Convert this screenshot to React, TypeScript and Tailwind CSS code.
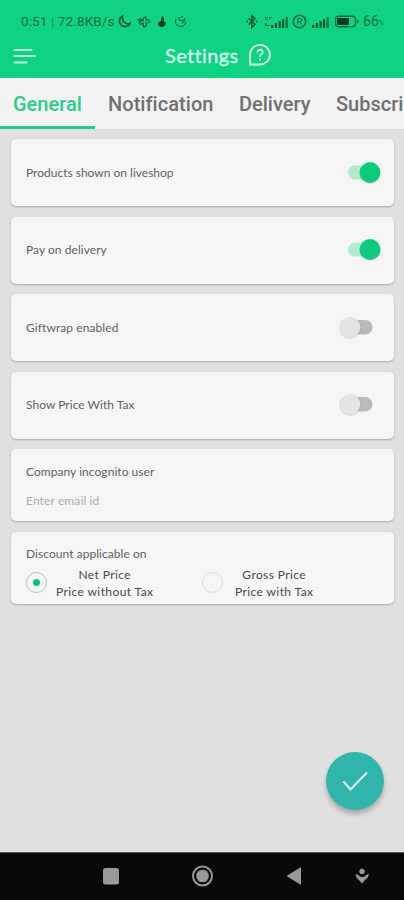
import type { ReactNode } from "react";

function Toggle({ on }: { on: boolean }) {
  return (
    <svg className="block h-[30px] w-[56px] shrink-0" viewBox="0 0 56 30" role="switch" aria-checked={on}>
      {on ? (
        <>
          <rect x="18" y="7.500" width="31" height="14" rx="7" fill="#b2ebd0" />
          <circle cx="40" cy="15.500" r="10.600" fill="#000" opacity=".12" />
          <circle cx="40" cy="14.500" r="10.400" fill="#0dcb7e" />
        </>
      ) : (
        <>
          <rect x="12" y="7" width="30.500" height="14.500" rx="7.200" fill="#b9b9b9" />
          <circle cx="20" cy="15" r="10.800" fill="#000" opacity=".1" />
          <circle cx="20" cy="14.500" r="10.300" fill="#e4e4e4" />
        </>
      )}
    </svg>
  );
}

function Card({ className, children }: { className: string; children: ReactNode }) {
  return (
    <section className={`rounded-[5px] bg-[#f6f6f6] shadow-[0_1px_2px_rgba(0,0,0,0.25)] ${className}`}>
      {children}
    </section>
  );
}

function SettingRow({ label, on, fit }: { label: string; on: boolean; fit: string }) {
  return (
    <Card className="flex h-[67px] items-center justify-between pr-[8px] pl-[15px]">
      <span className={`text-[12px] whitespace-nowrap text-[#5f5f5f] ${fit}`}>{label}</span>
      <Toggle on={on} />
    </Card>
  );
}

function Signal({ network }: { network?: boolean }) {
  return (
    <svg className={network ? "h-[14px] w-[26px]" : "h-[14px] w-[19px]"} viewBox={network ? "0 0 26 14" : "7 0 19 14"} fill="#0b5537">
      {network && (
        <path d="M2 2h3v1H3v1h2v1H2zM6 2h3v1H7v2H6zM1 9l3-1v2h3v1H3v1z" opacity=".65" />
      )}
      <rect x="8" y="10" width="2.200" height="3" />
      <rect x="11.800" y="8" width="2.200" height="5" />
      <rect x="15.500" y="6" width="2.200" height="7" />
      <rect x="19" y="4" width="2.200" height="9" />
      <rect x="22.600" y="2" width="2.200" height="11" opacity=".8" />
    </svg>
  );
}

function StatusBar() {
  return (
    <div className="flex h-[38px] items-center pt-[5px] pr-[20px] pl-[21px] font-[Roboto,sans-serif] text-[12.5px] text-[#0b6c42]">
      <span className="w-[96px] text-[13.5px] tracking-[0.12px] whitespace-nowrap">
        0:51 <span className="opacity-60">|</span> 72.8KB/s
      </span>
      <svg className="h-[15px] w-[70px]" viewBox="0 0 70 15" fill="none" stroke="#0b5537" strokeWidth="1.4">
        <path d="M5.500 2A5.600 5.600 0 1 0 13 9.500C8 11 4.500 6.500 5.500 2Z" strokeWidth="1.7" />
        <path d="M21 6c2-2 4-1 5 1 0-3 1-4 3-4v3c2-1 4 0 4 2l-4 1c1 2 0 4-2 4-1-1-1-3-1-4-2 2-4 1-4-1l3-1z" strokeWidth="1.1" />
        <path d="M45 2c3 1 2 4 2 6h2c0 3-2 5-5 5-3-1-4-3-2-5l2-1z" fill="#083c28" stroke="none" />
        <path d="M59 5c-2 5 2 9 7 7 2-1 3-3 2-5M61 3l2 4 3-1M66 2l-3 2M68 4l-3 6" strokeWidth="1" />
      </svg>
      <div className="ml-auto flex items-center">
        <svg className="mr-[4px] h-[15px] w-[14px]" viewBox="0 0 14 15" fill="none" stroke="#0b5537" strokeWidth="1.5">
          <path d="m3.500 4.300 6.500 6-3.200 3.200V1.500L10 4.500l-6.500 6" />
          <path d="M1.200 7.400h1.700M10.800 7.400h1.700" strokeWidth="1.8" />
        </svg>
        <Signal network />
        <svg className="mr-[4px] ml-[3px] h-[15px] w-[15px]" viewBox="0 0 15 15" fill="none" stroke="#0b6c42" strokeWidth="1.5">
          <circle cx="7.500" cy="7.500" r="6.200" />
          <path d="M5.700 10.500v-6h2.500a1.500 1.500 0 0 1 0 3.200H5.700m2.300 0 1.800 2.800" strokeWidth="1.1" />
        </svg>
        <Signal />
        <svg className="mr-[4px] ml-[4px] h-[13px] w-[25px]" viewBox="0 0 25 13">
          <rect x="1.500" y="1.200" width="20" height="10.600" rx="3" fill="none" stroke="#0b6c42" strokeWidth="1.4" />
          <rect x="3" y="3" width="12" height="7" rx="1" fill="#083c28" />
          <rect x="23" y="4.500" width="1.500" height="4" rx=".7" fill="#0b6c42" />
        </svg>
        <span className="text-[14px]">66</span>
        <span className="pt-[4px] text-[7px]">%</span>
      </div>
    </div>
  );
}

function Choice({ title, detail, selected, gap }: { title: string; detail: string; selected?: boolean; gap: string }) {
  return (
    <div className={`flex items-center ${gap}`}>
      <span className={`flex h-[21px] w-[21px] shrink-0 items-center justify-center rounded-full border ${selected ? "border-[#bcbcbc]" : "border-[#dcdcdc]"}`}>
        {selected && <span className="h-[7px] w-[7px] rounded-full bg-[#10bf78]" />}
      </span>
      <span className="text-center text-[12px] leading-[17px] tracking-[0.4px] whitespace-nowrap text-[#484848]">
        {title}
        <br />
        {detail}
      </span>
    </div>
  );
}

export default function App() {
  return (
    <div className="flex h-[900px] w-[404px] flex-col overflow-hidden bg-[#e0e0e0] font-[Lato,sans-serif]">
      <header className="h-[78px] shrink-0 bg-[#0fd283]">
        <StatusBar />
        <div className="flex h-[36px] items-center pl-[12px] text-[#dcffee]">
          <svg className="h-[18px] w-[24px]" viewBox="0 0 24 18" fill="none" stroke="#baf7d9" strokeWidth="2.2" strokeLinecap="round">
            <path d="M2.500 3h17M2.500 9h20.500M2.500 15.500h12" />
          </svg>
          <h1 className="mb-[2px] ml-[129px] w-[75px] text-[20px] leading-none font-normal tracking-[0.35px] [-webkit-text-stroke:0.3px_#dcffee]">Settings</h1>
          <svg className="mb-[2px] ml-[8px] h-[24px] w-[24px]" viewBox="0 0 24 24" fill="none" stroke="currentColor" strokeWidth="1.8">
            <path d="M2 21.500V11.500A10 9.800 0 1 1 12 21.500Z" strokeLinejoin="round" />
            <path d="M9.400 9.400a2.600 2.500 0 1 1 3.700 2.100c-.9.5-1.100.9-1.100 2.300M12 15.600v1.800" />
          </svg>
        </div>
      </header>
      <nav className="flex h-[51px] shrink-0 bg-[#f3f3f3] font-[Roboto,sans-serif] text-[20px] leading-[52px] font-medium whitespace-nowrap text-[#707070]">
        <span className="w-[95px] shrink-0 border-b-[3px] border-[#25ce89] pl-[13px] text-[#25ce89]">General</span>
        <span className="w-[131px] shrink-0 pl-[13px] tracking-[0.05px]">Notification</span>
        <span className="w-[97px] shrink-0 pl-[13px]">Delivery</span>
        <span className="shrink-0 pl-[13px]">Subscri</span>
      </nav>
      <main className="flex flex-1 flex-col gap-[10.5px] px-[11px] pt-[10px] pr-[10px]">
        <SettingRow label="Products shown on liveshop" on fit="tracking-[0px]" />
        <SettingRow label="Pay on delivery" on fit="tracking-[0.05px]" />
        <SettingRow label="Giftwrap enabled" on={false} fit="tracking-[0.08px]" />
        <SettingRow label="Show Price With Tax" on={false} fit="tracking-[0.03px]" />
        <Card className="flex h-[72px] flex-col pt-[14px] pl-[15px]">
          <span className="text-[12px] leading-[18px] tracking-[0.05px] text-[#606060]">Company incognito user</span>
          <span className="mt-[11px] text-[12px] leading-[18px] tracking-[0.12px] text-[#ababab]">Enter email id</span>
        </Card>
        <Card className="h-[72px] pt-[13px] pl-[15px]">
          <div className="text-[12px] leading-[18px] tracking-[0.05px] text-[#606060]">Discount applicable on</div>
          <div className="mt-[3px] flex">
            <div className="w-[176px]">
              <Choice title="Net Price" detail="Price without Tax" selected gap="gap-[9px]" />
            </div>
            <Choice title="Gross Price" detail="Price with Tax" gap="gap-[12px]" />
          </div>
        </Card>
        <button className="mt-auto mr-[10px] mb-[42px] flex h-[58px] w-[58px] items-center justify-center self-end rounded-full bg-[#30b6ad] shadow-[0_4px_5px_rgba(0,0,0,0.25)]">
          <svg className="h-[24px] w-[28px]" viewBox="0 0 28 24" fill="none" stroke="#e5fffb" strokeWidth="2">
            <path d="m2.500 12.500 7 8L26 3.500" />
          </svg>
        </button>
      </main>
      <footer className="flex h-[48px] shrink-0 items-center border-t border-[#555] bg-[#090909]">
        <svg className="h-[47px] w-[404px]" viewBox="0 853 404 47" fill="#999">
          <rect x="103" y="868" width="16" height="16.500" rx="2.500" />
          <circle cx="202.500" cy="876" r="9.500" fill="none" stroke="#999" strokeWidth="2" />
          <circle cx="202.500" cy="876" r="6.300" />
          <path d="M286.500 876 301 867v18z" />
          <circle cx="362" cy="871.500" r="2.700" />
          <path d="M355.500 874.500q2-1 4 1.700 2.700 1.500 5.500 0 2-2.700 4-1.700-1 4-4 5.500L362 883.500 359 880q-3-2-3.500-5.500z" />
        </svg>
      </footer>
    </div>
  );
}
